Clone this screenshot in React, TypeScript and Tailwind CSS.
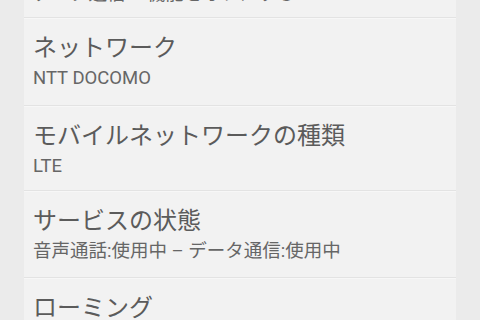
import React from "react";

const font = { fontFamily: 'Roboto, "Noto Sans CJK JP", sans-serif' };

function Divider() {
  return <div className="h-[2px] shrink-0 bg-[#e3e3e3] border-b border-[#f7f7f7]" />;
}

function Row({ title, sub, pb }: { title: string; sub?: string; pb: string }) {
  return (
    <div className={`pt-[14px] px-[9px] shrink-0 ${pb}`}>
      <div className="text-[24px] leading-[30px] text-[#5b5b5b] whitespace-nowrap">{title}</div>
      {sub && (
        <div className="mt-[2px] text-[18.5px] leading-[27px] text-[#666666] whitespace-nowrap">{sub}</div>
      )}
    </div>
  );
}

export default function App() {
  return (
    <div
      className="w-[480px] h-[320px] overflow-hidden bg-[#ebebeb] px-[24px]"
      style={font}
    >
      <div className="h-full flex flex-col bg-[#f2f2f2]">
        <div className="-mt-[19px] pb-[9px] px-[9px] shrink-0 text-[18.5px] leading-[27px] text-[#666666] whitespace-nowrap">
          データ通信 – 機能をオフにする
        </div>
        <Divider />
        <Row title="ネットワーク" sub="NTT DOCOMO" pb="pb-[13px]" />
        <Divider />
        <Row title="モバイルネットワークの種類" sub="LTE" pb="pb-[10px]" />
        <Divider />
        <Row title="サービスの状態" sub="音声通話:使用中 – データ通信:使用中" pb="pb-[12px]" />
        <Divider />
        <Row title="ローミング" pb="pb-[12px]" />
      </div>
    </div>
  );
}
